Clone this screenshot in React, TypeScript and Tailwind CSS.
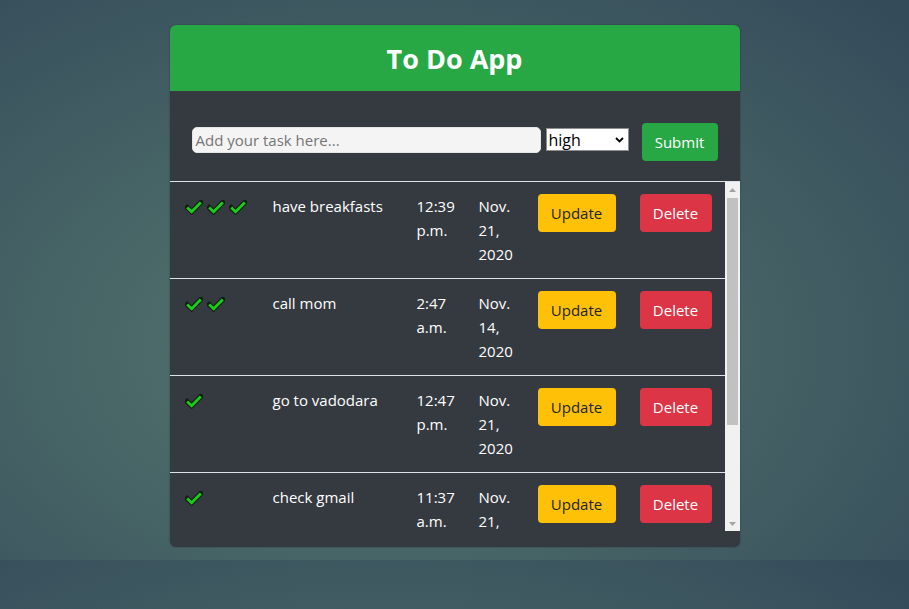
import React from "react";

type Row = {
  checks: number;
  task: string;
  time: string[];
  date: string[];
};

const rows: Row[] = [
  { checks: 3, task: "have breakfasts", time: ["12:39", "p.m."], date: ["Nov.", "21,", "2020"] },
  { checks: 2, task: "call mom", time: ["2:47", "a.m."], date: ["Nov.", "14,", "2020"] },
  { checks: 1, task: "go to vadodara", time: ["12:47", "p.m."], date: ["Nov.", "21,", "2020"] },
  { checks: 1, task: "check gmail", time: ["11:37", "a.m."], date: ["Nov.", "21,", "2020"] },
];

function Check() {
  return (
    <svg width="18" height="15" viewBox="0 0 18 15" className="block">
      <path d="M2.2 7.6 L6.6 11.8 L15.8 2.4" fill="none" stroke="#0f1f0f" strokeWidth="5" strokeLinecap="square" strokeLinejoin="miter" />
      <path d="M2.2 7.6 L6.6 11.8 L15.8 2.4" fill="none" stroke="#1ccb1c" strokeWidth="2.8" strokeLinecap="butt" strokeLinejoin="miter" />
    </svg>
  );
}

function Triangle({ up }: { up: boolean }) {
  return (
    <svg width="7" height="4" viewBox="0 0 7 4" className="block">
      <path d={up ? "M0 4 L3.5 0 L7 4 Z" : "M0 0 L3.5 4 L7 0 Z"} fill="#a3a3a3" />
    </svg>
  );
}

export default function App() {
  return (
    <div
      className="min-h-[609px] w-full bg-[radial-gradient(ellipse_at_42%_62%,#56756f_0%,#4a6868_35%,#334a59_100%)] bg-[length:100%_560px] bg-repeat pt-[25px]"
      style={{ fontFamily: '"Open Sans", "Noto Sans", sans-serif' }}
    >
      <div className="mx-auto flex w-[570px] flex-col overflow-hidden rounded-[6px] bg-[#343a40] shadow-[0_0_2px_rgba(0,0,0,0.35)]">
        <div className="flex h-[66px] items-center justify-center bg-[#28a745]">
          <h1 className="text-[27px] font-bold leading-none text-white">To Do App</h1>
        </div>

        <div className="flex h-[90px] items-start px-[22px] pt-[32px]">
          <div className="mt-[4px] flex h-[26px] w-[349px] items-center rounded-[5px] border border-[#e5e5e5] bg-[#f4f4f4] px-[3px]">
            <span className="text-[15px] leading-none text-[#757575]">Add your task here...</span>
          </div>
          <div className="ml-[5px] mt-[5px] flex h-[23px] w-[83px] items-center justify-between border border-[#8f8f8f] bg-white pl-[2px] pr-[4px]">
            <span className="text-[16px] leading-none text-black">high</span>
            <svg width="9" height="6" viewBox="0 0 9 6">
              <path d="M1 1 L4.5 4.5 L8 1" fill="none" stroke="#000" strokeWidth="1.8" />
            </svg>
          </div>
          <div className="ml-[13px] flex h-[38px] w-[76px] items-center justify-center rounded-[4px] bg-[#28a745] text-[15px] text-white">
            Submit
          </div>
        </div>

        <div className="flex h-[350px] border-t border-[#dee2e6]">
          <div className="h-[349px] w-[555px] overflow-hidden">
            {rows.map((r, i) => (
              <div
                key={i}
                className="grid h-[97px] grid-cols-[91px_144px_62px_59px_102px_97px] border-b border-[#dee2e6] text-[15px] leading-[24px] text-white"
              >
                <div className="p-[12px]">
                  <div className="ml-[3px] mt-[6px] flex gap-[4px]">
                    {Array.from({ length: r.checks }).map((_, k) => (
                      <Check key={k} />
                    ))}
                  </div>
                </div>
                <div className="p-[12px]">{r.task}</div>
                <div className="p-[12px]">
                  {r.time.map((t, k) => (
                    <div key={k}>{t}</div>
                  ))}
                </div>
                <div className="p-[12px]">
                  {r.date.map((t, k) => (
                    <div key={k} className="whitespace-nowrap">{t}</div>
                  ))}
                </div>
                <div className="p-[12px]">
                  <div className="flex h-[38px] w-[78px] items-center justify-center rounded-[4px] bg-[#ffc107] text-[#212529]">
                    Update
                  </div>
                </div>
                <div className="p-[12px]">
                  <div className="flex h-[38px] w-[72px] items-center justify-center rounded-[4px] bg-[#dc3545] text-white">
                    Delete
                  </div>
                </div>
              </div>
            ))}
          </div>
          <div className="flex h-[349px] w-[15px] flex-col bg-[#f1f1f1]">
            <div className="flex h-[15px] items-center justify-center">
              <Triangle up={true} />
            </div>
            <div className="mx-[2px] mt-[1px] h-[227px] bg-[#c1c1c1]" />
            <div className="flex-1" />
            <div className="flex h-[15px] items-center justify-center">
              <Triangle up={false} />
            </div>
          </div>
        </div>
        <div className="h-[16px]" />
      </div>
    </div>
  );
}
